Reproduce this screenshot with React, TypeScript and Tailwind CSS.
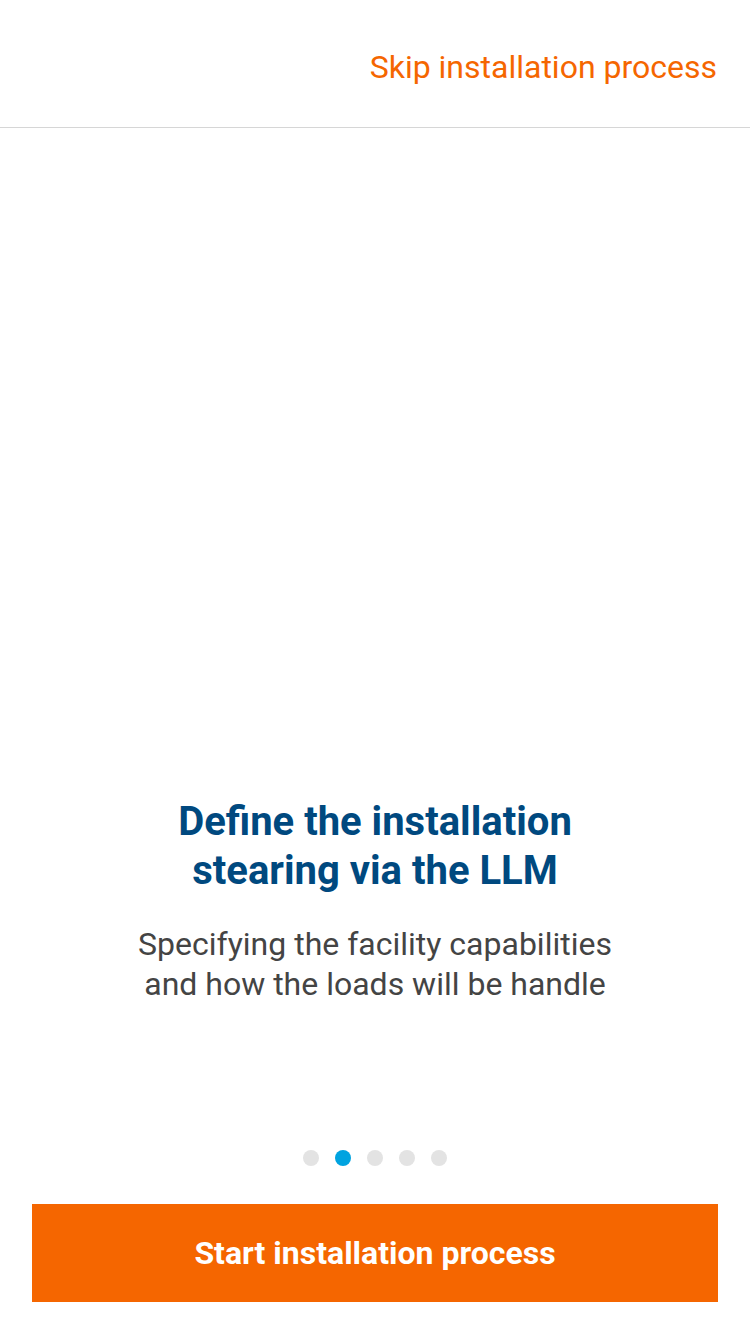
import React from "react";

const App = () => {
  const dots = [0, 1, 2, 3, 4];
  const active = 1;

  return (
    <div
      className="flex flex-col w-[750px] h-[1334px] bg-white"
      style={{ fontFamily: "Roboto, 'Liberation Sans', sans-serif" }}
    >
      <header className="flex items-start justify-end h-[128px] border-b border-[#d6d6d6] pr-[33px] pt-[47px]">
        <button className="text-[32px] leading-[40px] text-[#f56600]">
          Skip installation process
        </button>
      </header>

      <main className="flex flex-col items-center flex-1">
        <h1 className="mt-[669px] text-center text-[40px] leading-[49px] font-bold text-[#00497f]">
          Define the installation
          <br />
          stearing via the LLM
        </h1>
        <p className="mt-[29px] text-center text-[32px] leading-[40px] text-[#444444]">
          Specifying the facility capabilities
          <br />
          and how the loads will be handle
        </p>

        <div className="flex items-center gap-4 mt-[146px]">
          {dots.map((d) => (
            <span
              key={d}
              className={
                d === active
                  ? "w-4 h-4 rounded-full bg-[#00a3e0]"
                  : "w-4 h-4 rounded-full bg-[#e3e3e3]"
              }
            />
          ))}
        </div>
      </main>

      <div className="px-8 pb-8">
        <button className="w-full h-[98px] bg-[#f56600] text-white text-[32px] font-bold">
          Start installation process
        </button>
      </div>
    </div>
  );
};

export default App;
